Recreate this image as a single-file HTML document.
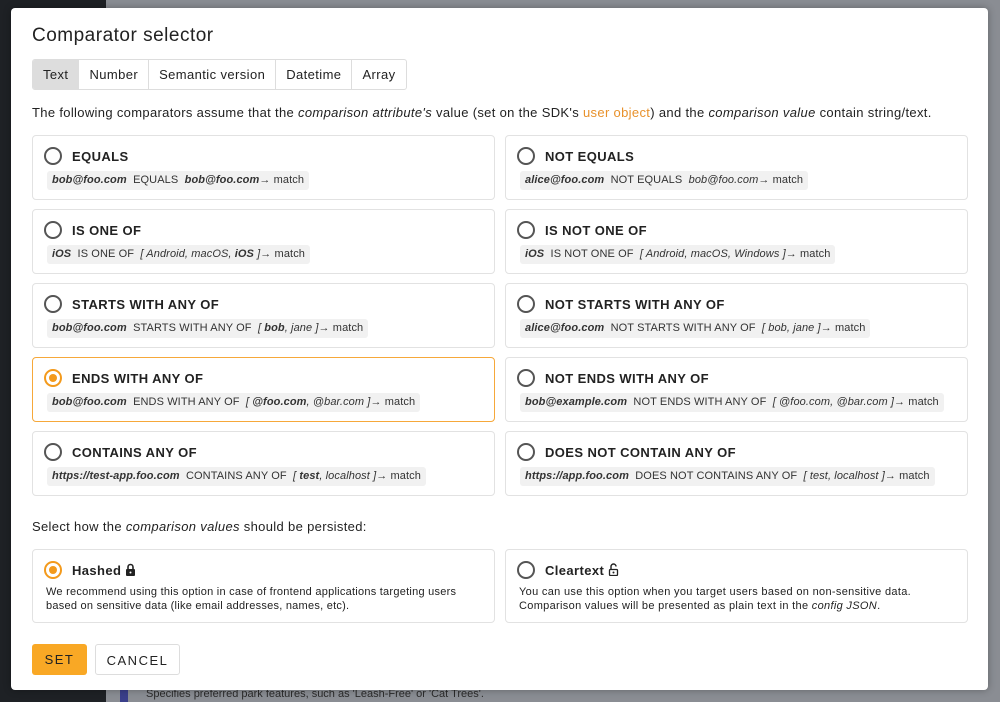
<!DOCTYPE html>
<html><head><meta charset="utf-8"><style>
*{box-sizing:border-box;margin:0;padding:0}
body{width:1000px;height:702px;overflow:hidden;position:relative;font-family:"Liberation Sans",sans-serif;color:#222;background:#8a8d93}
.dark{position:absolute;left:0;top:0;width:106px;height:702px;background:#1e2125}
.strip{position:absolute;left:120px;top:690px;width:8px;height:12px;background:#3a3f8a}
.bt{position:absolute;left:146px;top:688px;font-size:11px;color:#2a2a2a}
.modal{position:absolute;left:11px;top:8px;width:977px;height:682px;background:#fff;border-radius:4px;box-shadow:0 0 8px rgba(0,0,0,.3)}
h1{position:absolute;left:21px;top:17px;font-size:19px;font-weight:normal;letter-spacing:.5px;color:#222}
.tabs{position:absolute;left:21px;top:51px;height:31px;display:flex;border:1px solid #ddd;border-radius:3px;overflow:hidden}
.tabs div{font-size:13px;padding:0 10px;line-height:29px;border-left:1px solid #ddd;letter-spacing:.4px}
.tabs div:first-child{border-left:none;background:#ddd}
.p{position:absolute;left:21px;font-size:13px;letter-spacing:.33px;white-space:nowrap}
.or{color:#e8912b}
.card{position:absolute;width:463px;height:65px;border:1px solid #e2e2e2;border-radius:4px;background:#fff}
.card.sel{border-color:#f6a83a}
.rad{position:absolute;left:11px;top:11px;width:18px;height:18px;border:2px solid #555;border-radius:50%}
.sel .rad,.rad.on{border-color:#f39a1c}
.sel .rad:after,.rad.on:after{content:"";position:absolute;left:3px;top:3px;width:8px;height:8px;border-radius:50%;background:#f39a1c}
.t{position:absolute;left:39px;top:13px;font-size:13px;font-weight:bold;letter-spacing:.4px}
.pill{position:absolute;left:14px;top:35px;height:19px;line-height:19px;padding:0 5px;background:#f1f1f1;border-radius:3px;font-size:11px;white-space:nowrap;color:#333;letter-spacing:.1px}
.pill b{font-style:italic}
.d{position:absolute;left:13px;top:35px;font-size:11px;line-height:14px;letter-spacing:.25px;color:#222}
.btn{position:absolute;top:636px;height:31px;line-height:31px;font-size:13px;letter-spacing:1.5px;text-align:center;border-radius:3px}
</style></head><body>
<div class="dark"></div><div class="strip"></div>
<div class="bt">Specifies preferred park features, such as 'Leash-Free' or 'Cat Trees'.</div>
<div class="modal">
<h1>Comparator selector</h1>
<div class="tabs"><div>Text</div><div>Number</div><div>Semantic version</div><div>Datetime</div><div>Array</div></div>
<div class="p" style="top:97px">The following comparators assume that the <i>comparison attribute's</i> value (set on the SDK's <span class="or">user object</span>) and the <i>comparison value</i> contain string/text.</div>

<div class="card" style="left:21px;top:127px"><div class="rad"></div><div class="t">EQUALS</div><div class="pill"><b>bob@foo.com</b>&nbsp; EQUALS &nbsp;<b>bob@foo.com</b>→ match</div></div>
<div class="card" style="left:494px;top:127px"><div class="rad"></div><div class="t">NOT EQUALS</div><div class="pill"><b>alice@foo.com</b>&nbsp; NOT EQUALS &nbsp;<i>bob@foo.com</i>→ match</div></div>

<div class="card" style="left:21px;top:201px"><div class="rad"></div><div class="t">IS ONE OF</div><div class="pill"><b>iOS</b>&nbsp; IS ONE OF &nbsp;<i>[ Android, macOS, <b>iOS</b> ]</i>→ match</div></div>
<div class="card" style="left:494px;top:201px"><div class="rad"></div><div class="t">IS NOT ONE OF</div><div class="pill"><b>iOS</b>&nbsp; IS NOT ONE OF &nbsp;<i>[ Android, macOS, Windows ]</i>→ match</div></div>

<div class="card" style="left:21px;top:275px"><div class="rad"></div><div class="t">STARTS WITH ANY OF</div><div class="pill"><b>bob@foo.com</b>&nbsp; STARTS WITH ANY OF &nbsp;<i>[ <b>bob</b>, jane ]</i>→ match</div></div>
<div class="card" style="left:494px;top:275px"><div class="rad"></div><div class="t">NOT STARTS WITH ANY OF</div><div class="pill"><b>alice@foo.com</b>&nbsp; NOT STARTS WITH ANY OF &nbsp;<i>[ bob, jane ]</i>→ match</div></div>

<div class="card sel" style="left:21px;top:349px"><div class="rad"></div><div class="t">ENDS WITH ANY OF</div><div class="pill"><b>bob@foo.com</b>&nbsp; ENDS WITH ANY OF &nbsp;<i>[ <b>@foo.com</b>, @bar.com ]</i>→ match</div></div>
<div class="card" style="left:494px;top:349px"><div class="rad"></div><div class="t">NOT ENDS WITH ANY OF</div><div class="pill"><b>bob@example.com</b>&nbsp; NOT ENDS WITH ANY OF &nbsp;<i>[ @foo.com, @bar.com ]</i>→ match</div></div>

<div class="card" style="left:21px;top:423px"><div class="rad"></div><div class="t">CONTAINS ANY OF</div><div class="pill"><b>https://test-app.foo.com</b>&nbsp; CONTAINS ANY OF &nbsp;<i>[ <b>test</b>, localhost ]</i>→ match</div></div>
<div class="card" style="left:494px;top:423px"><div class="rad"></div><div class="t">DOES NOT CONTAIN ANY OF</div><div class="pill"><b>https://app.foo.com</b>&nbsp; DOES NOT CONTAINS ANY OF &nbsp;<i>[ test, localhost ]</i>→ match</div></div>

<div class="p" style="top:511px">Select how the <i>comparison values</i> should be persisted:</div>

<div class="card" style="left:21px;top:541px;height:74px"><div class="rad on"></div><div class="t">Hashed <svg width="11" height="13" viewBox="0 0 11 13" style="vertical-align:-1px"><path d="M3 6V4a2.5 2.5 0 0 1 5 0v2" fill="none" stroke="#222" stroke-width="1.6"/><rect x="1" y="6" width="9" height="7" rx="1" fill="#222"/><circle cx="5.5" cy="9.5" r="1" fill="#fff"/></svg></div><div class="d">We recommend using this option in case of frontend applications targeting users<br>based on sensitive data (like email addresses, names, etc).</div></div>
<div class="card" style="left:494px;top:541px;height:74px"><div class="rad"></div><div class="t">Cleartext <svg width="11" height="13" viewBox="0 0 11 13" style="vertical-align:-1px"><path d="M3 6V3.5a2.5 2.5 0 0 1 5 0" fill="none" stroke="#222" stroke-width="1.4"/><rect x="1.5" y="6.5" width="8" height="6" rx="1" fill="none" stroke="#222" stroke-width="1.3"/><circle cx="5.5" cy="9.5" r="1" fill="#222"/></svg></div><div class="d" style="letter-spacing:.32px">You can use this option when you target users based on non-sensitive data.<br>Comparison values will be presented as plain text in the <i>config JSON</i>.</div></div>

<div class="btn" style="left:21px;width:55px;background:#f9a825;color:#222">SET</div>
<div class="btn" style="left:84px;width:85px;border:1px solid #ddd;color:#222">CANCEL</div>
</div>
</body></html>
